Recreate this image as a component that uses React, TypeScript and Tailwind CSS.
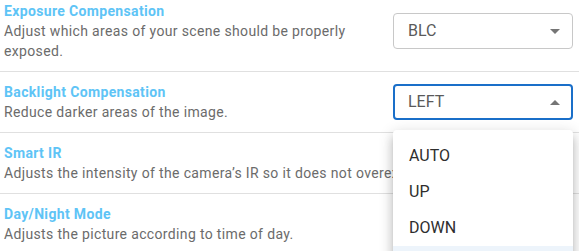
import { useState } from 'react';

interface Setting {
  title: string;
  description: string;
  value: string;
  nowrap?: boolean;
}

const settings: Setting[] = [
  {
    title: 'Exposure Compensation',
    description: 'Adjust which areas of your scene should be properly exposed.',
    value: 'BLC',
  },
  {
    title: 'Backlight Compensation',
    description: 'Reduce darker areas of the image.',
    value: 'LEFT',
  },
  {
    title: 'Smart IR',
    description: "Adjusts the intensity of the camera’s IR so it does not overexpose nearby objects.",
    value: 'ON',
    nowrap: true,
  },
  {
    title: 'Day/Night Mode',
    description: 'Adjusts the picture according to time of day.',
    value: 'AUTO',
  },
];

const backlightOptions = ['AUTO', 'UP', 'DOWN', 'RIGHT'];

function Caret({ up }: { up?: boolean }) {
  return (
    <svg width="10" height="5" viewBox="0 0 10 5" className="fill-[#757575]">
      {up ? <path d="M0 5 L5 0 L10 5 Z" /> : <path d="M0 0 L5 5 L10 0 Z" />}
    </svg>
  );
}

export default function App() {
  const [openIndex] = useState<number>(1);

  return (
    <div className="h-[251px] w-[579px] overflow-hidden bg-white font-['Roboto',sans-serif]">
      <div className="-mt-[9px]">
        {settings.map((s, i) => {
          const open = i === openIndex;
          return (
            <div
              key={s.title}
              className={`flex items-center gap-3 py-[10px] pl-1 pr-[6px] ${i < settings.length - 1 ? 'border-b border-[#e0e0e0]' : ''}`}
            >
              <div className="min-w-0 flex-1 tracking-[0.35px]">
                <div className="text-[14px] leading-5 font-bold text-[#5ec4f6]">{s.title}</div>
                <div className={`text-[14px] leading-5 text-[#6b6b6b] ${s.nowrap ? 'whitespace-nowrap' : ''}`}>
                  {s.description}
                </div>
              </div>
              <div className="relative w-[180px] shrink-0">
                <div
                  className={`flex h-9 items-center justify-between rounded bg-white text-[16px] text-[#5a5a5a] ${open ? 'border-2 border-[#1a6fc9] pl-[13px] pr-[11px]' : 'border border-[#c8c8c8] pl-[14px] pr-[12px]'}`}
                >
                  <span>{s.value}</span>
                  <Caret up={open} />
                </div>
                {open && (
                  <div className="absolute left-0 top-[calc(100%+10px)] z-10 w-[180px] rounded bg-white py-2 shadow-[0_5px_5px_-3px_rgba(0,0,0,0.2),0_8px_10px_1px_rgba(0,0,0,0.14),0_3px_14px_2px_rgba(0,0,0,0.12)]">
                    {backlightOptions.map((o, j) => (
                      <div
                        key={o}
                        className={`flex h-9 items-center px-4 text-[16px] text-[#2e2e2e] ${j === 3 ? 'bg-[#edf4fb]' : ''}`}
                      >
                        {o}
                      </div>
                    ))}
                  </div>
                )}
              </div>
            </div>
          );
        })}
      </div>
    </div>
  );
}
